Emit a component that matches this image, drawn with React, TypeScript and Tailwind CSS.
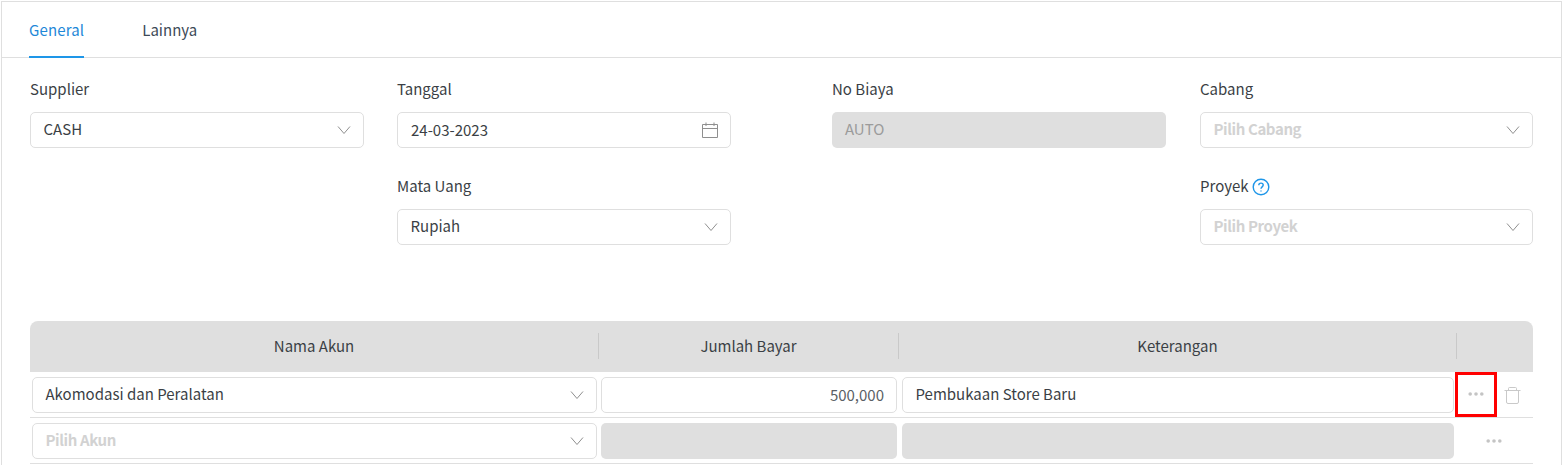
import type { ReactNode } from "react";

const cols = "grid grid-cols-[569px_300px_558px_76px]";
const font = { fontFamily: '"Noto Sans CJK SC", "Noto Sans", sans-serif' };

function Chevron() {
  return (
    <svg viewBox="0 0 14 8" className="h-[8px] w-[14px] shrink-0 text-[#8f8f8f]" fill="none" stroke="currentColor" strokeWidth="1">
      <path d="M1 .5l6 7L13 .5" />
    </svg>
  );
}

function Dots() {
  return (
    <svg viewBox="0 0 16 4" className="h-1 w-4 text-[#c4c4c4]" fill="currentColor">
      <circle cx="2.200" cy="2" r="1.800" />
      <circle cx="8" cy="2" r="1.800" />
      <circle cx="13.800" cy="2" r="1.800" />
    </svg>
  );
}

function Select({ value, placeholder }: { value?: string; placeholder?: string }) {
  return (
    <div className="flex h-9 items-center justify-between rounded-[5px] border border-[#dfdfdf] bg-white pl-[12.5px] pr-[12px]">
      {value ? (
        <span className="pb-[4px] text-[#3b3f45]">{value}</span>
      ) : (
        <span className="pb-[4px] font-semibold tracking-[-0.4px] text-[#d2d2d2]">{placeholder}</span>
      )}
      <Chevron />
    </div>
  );
}

function Field({ label, children }: { label: ReactNode; children: ReactNode }) {
  return (
    <div>
      <div className="mb-[11px] flex h-[24px] items-center gap-[3px] pb-[2px] text-[#3b3f45]">{label}</div>
      {children}
    </div>
  );
}

function Disabled() {
  return <div className="h-9 rounded-[5px] bg-[#dfdfdf]" />;
}

function HeadCell({ label, last }: { label?: string; last?: boolean }) {
  return (
    <div className={`my-[12px] flex h-[26px] items-center justify-center pb-[2px] text-[#3b3f45] ${last ? "" : "border-r border-[#c9c9c9]"}`}>
      {label}
    </div>
  );
}

export default function App() {
  return (
    <div className="h-[465px] overflow-hidden bg-white pl-[1px] pr-[1px] pt-[1px] text-[15px] leading-none" style={font}>
      <div className="h-[500px] border-l border-r border-t border-[#dfdfdf]">
        <div className="flex h-[56px] gap-[58px] border-b border-[#dfdfdf] pl-[27px]">
          <div className="flex h-[56px] items-center border-b-2 border-[#1e96e8] tracking-[0.15px] text-[#1e88d8]">General</div>
          <div className="flex h-[56px] items-center pb-[2px] text-[#3d4a57]">Lainnya</div>
        </div>

        <div className="pl-[28px] pr-[28px]">
          <div className="flex gap-[101px] pt-[19px]">
            <div className="grid w-[701px] grid-cols-[334px_334px] gap-x-[33px] gap-y-[26px]">
              <Field label="Supplier">
                <Select value="CASH" />
              </Field>
              <Field label="Tanggal">
                <div className="flex h-9 items-center justify-between rounded-[5px] border border-[#dfdfdf] pl-[13px] pr-[12px] text-[#3b3f45]">
                  <span className="pb-[2px]">24-03-2023</span>
                  <svg viewBox="0 0 16 16" className="h-4 w-4 text-[#8f8f8f]" fill="none" stroke="currentColor" strokeWidth="1">
                    <path d="M.5 2.500h15v13H.5zM.5 6.500h15M4 .5v3.500M12 .5v3.500" />
                  </svg>
                </div>
              </Field>
              <div />
              <Field label="Mata Uang">
                <Select value="Rupiah" />
              </Field>
            </div>
            <div className="grid w-[701px] grid-cols-[334px_333px] gap-x-[34px] gap-y-[26px]">
              <Field label="No Biaya">
                <div className="flex h-9 items-center rounded-[5px] bg-[#dfdfdf] pb-[4px] pl-[13px] text-[#9b9b9b]">AUTO</div>
              </Field>
              <Field label="Cabang">
                <Select placeholder="Pilih Cabang" />
              </Field>
              <div />
              <Field
                label={
                  <>
                    Proyek
                    <svg viewBox="0 0 18 18" className="mt-[3px] h-[18px] w-[18px] text-[#1e96e8]" fill="none" stroke="currentColor" strokeWidth="1.400">
                      <circle cx="9" cy="9" r="7.800" />
                      <path d="M6.800 7.200c0-1.300 1-2.100 2.200-2.100s2.200.8 2.200 2c0 1.800-2.200 1.800-2.200 3.700" />
                      <path d="M9 12.400v1.200" />
                    </svg>
                  </>
                }
              >
                <Select placeholder="Pilih Proyek" />
              </Field>
            </div>
          </div>

          <div className="mt-[76px] w-[1503px]">
            <div className={`${cols} h-[51px] rounded-t-[8px] bg-[#dfdfdf]`}>
              <HeadCell label="Nama Akun" />
              <HeadCell label="Jumlah Bayar" />
              <HeadCell label="Keterangan" />
              <HeadCell last />
            </div>

            <div className={`${cols} h-[46px] border-b border-[#dfdfdf] pt-[5px]`}>
              <div className="pl-[2px] pr-[2px]">
                <Select value="Akomodasi dan Peralatan" />
              </div>
              <div className="pl-[2px] pr-[2px]">
                <div className="flex h-9 items-center justify-end rounded-[5px] border border-[#dfdfdf] pb-[2px] pr-[12px] text-[#5a5f65]">500,000</div>
              </div>
              <div className="pl-[3px] pr-[3px]">
                <div className="flex h-9 items-center rounded-[5px] border border-[#dfdfdf] pb-[4px] pl-[12.5px] text-[#3b3f45]">Pembukaan Store Baru</div>
              </div>
              <div className="relative flex h-9 items-center">
                <div className="absolute left-[-2px] top-[-5px] flex h-[45px] w-[42px] items-center justify-center border-[3px] border-[#ff0000] pb-px">
                  <Dots />
                </div>
                <svg viewBox="0 0 17 17" className="ml-[47px] h-[17px] w-[17px] text-[#c9c9c9]" fill="none" stroke="currentColor" strokeWidth="1">
                  <path d="M.5 3.500h16M4.500 3.500V1.500q0-1 1-1h6q1 0 1 1v2" />
                  <path d="M2.500 3.500v11.500q0 1.500 1.500 1.500h9q1.500 0 1.500-1.500V3.500" />
                </svg>
              </div>
            </div>

            <div className={`${cols} h-[46px] border-b border-[#dfdfdf] pt-[5px]`}>
              <div className="pl-[2px] pr-[2px]">
                <Select placeholder="Pilih Akun" />
              </div>
              <div className="pl-[2px] pr-[2px]">
                <Disabled />
              </div>
              <div className="pl-[3px] pr-[3px]">
                <Disabled />
              </div>
              <div className="flex h-9 items-center justify-center pr-[2px]">
                <Dots />
              </div>
            </div>
          </div>
        </div>
      </div>
    </div>
  );
}
